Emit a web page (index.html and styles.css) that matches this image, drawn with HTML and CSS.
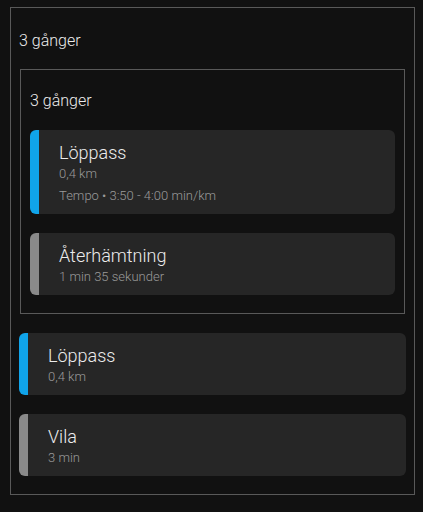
FILE: index.html
```html
<!doctype html>
<html>
    <head>
        <meta charset="UTF-8">
        <title>Pass</title>
        <link rel="stylesheet" href="styles.css">
    </head>
    <body>
        <div class="repeat">
            <div class="repeat-title">3 gånger</div>
            <div class="repeat inner">
                <div class="repeat-title">3 gånger</div>
                <div class="step run">
                    <div class="step-name">Löppass</div>
                    <div class="step-info">0,4 km</div>
                    <div class="step-info tempo">Tempo • 3:50 - 4:00 min/km</div>
                </div>
                <div class="step rest">
                    <div class="step-name">Återhämtning</div>
                    <div class="step-info">1 min 35 sekunder</div>
                </div>
            </div>
            <div class="step run">
                <div class="step-name">Löppass</div>
                <div class="step-info">0,4 km</div>
            </div>
            <div class="step rest">
                <div class="step-name">Vila</div>
                <div class="step-info">3 min</div>
            </div>
        </div>
    </body>
</html>
```
FILE: styles.css
```css
*{
    margin: 0;
    padding: 0;
    box-sizing: border-box;
}
html{
    background: #111111;
}
body{
    margin: 7px 8px 0 10px;
    font-family: Roboto, "Noto Sans", sans-serif;
    font-weight: 300;
    color: #ececec;
}
.repeat{                          /* ram runt ett upprepat block */
    border: 1px solid #595959;
    padding: 0 8px 18px 8px;
}
.repeat-title{
    font-size: 16px;
    line-height: 19px;
    padding-top: 23px;
    margin-bottom: 19px;
}
.inner{
    margin: 0 1px 19px 1px;
    padding: 0 9px 18px 9px;
}
.inner .repeat-title{
    padding-top: 21px;
    margin-bottom: 20px;
}
.step{                            /* ett steg i passet */
    background: #262626;
    border-radius: 6px;
    padding: 12px 12px 10px 20px;
    border-left: 9px solid #8a8a8a;
    margin-bottom: 19px;
}
.step:last-child{
    margin-bottom: 0;
}
.step.run{
    border-left-color: #10a4ea;
}
.step-name{
    font-size: 18px;
    line-height: 21px;
    margin-bottom: 3px;
}
.step-info{
    font-size: 13px;
    line-height: 16px;
    color: #9a9a9a;
}
.tempo{
    margin-top: 6px;
}
```
